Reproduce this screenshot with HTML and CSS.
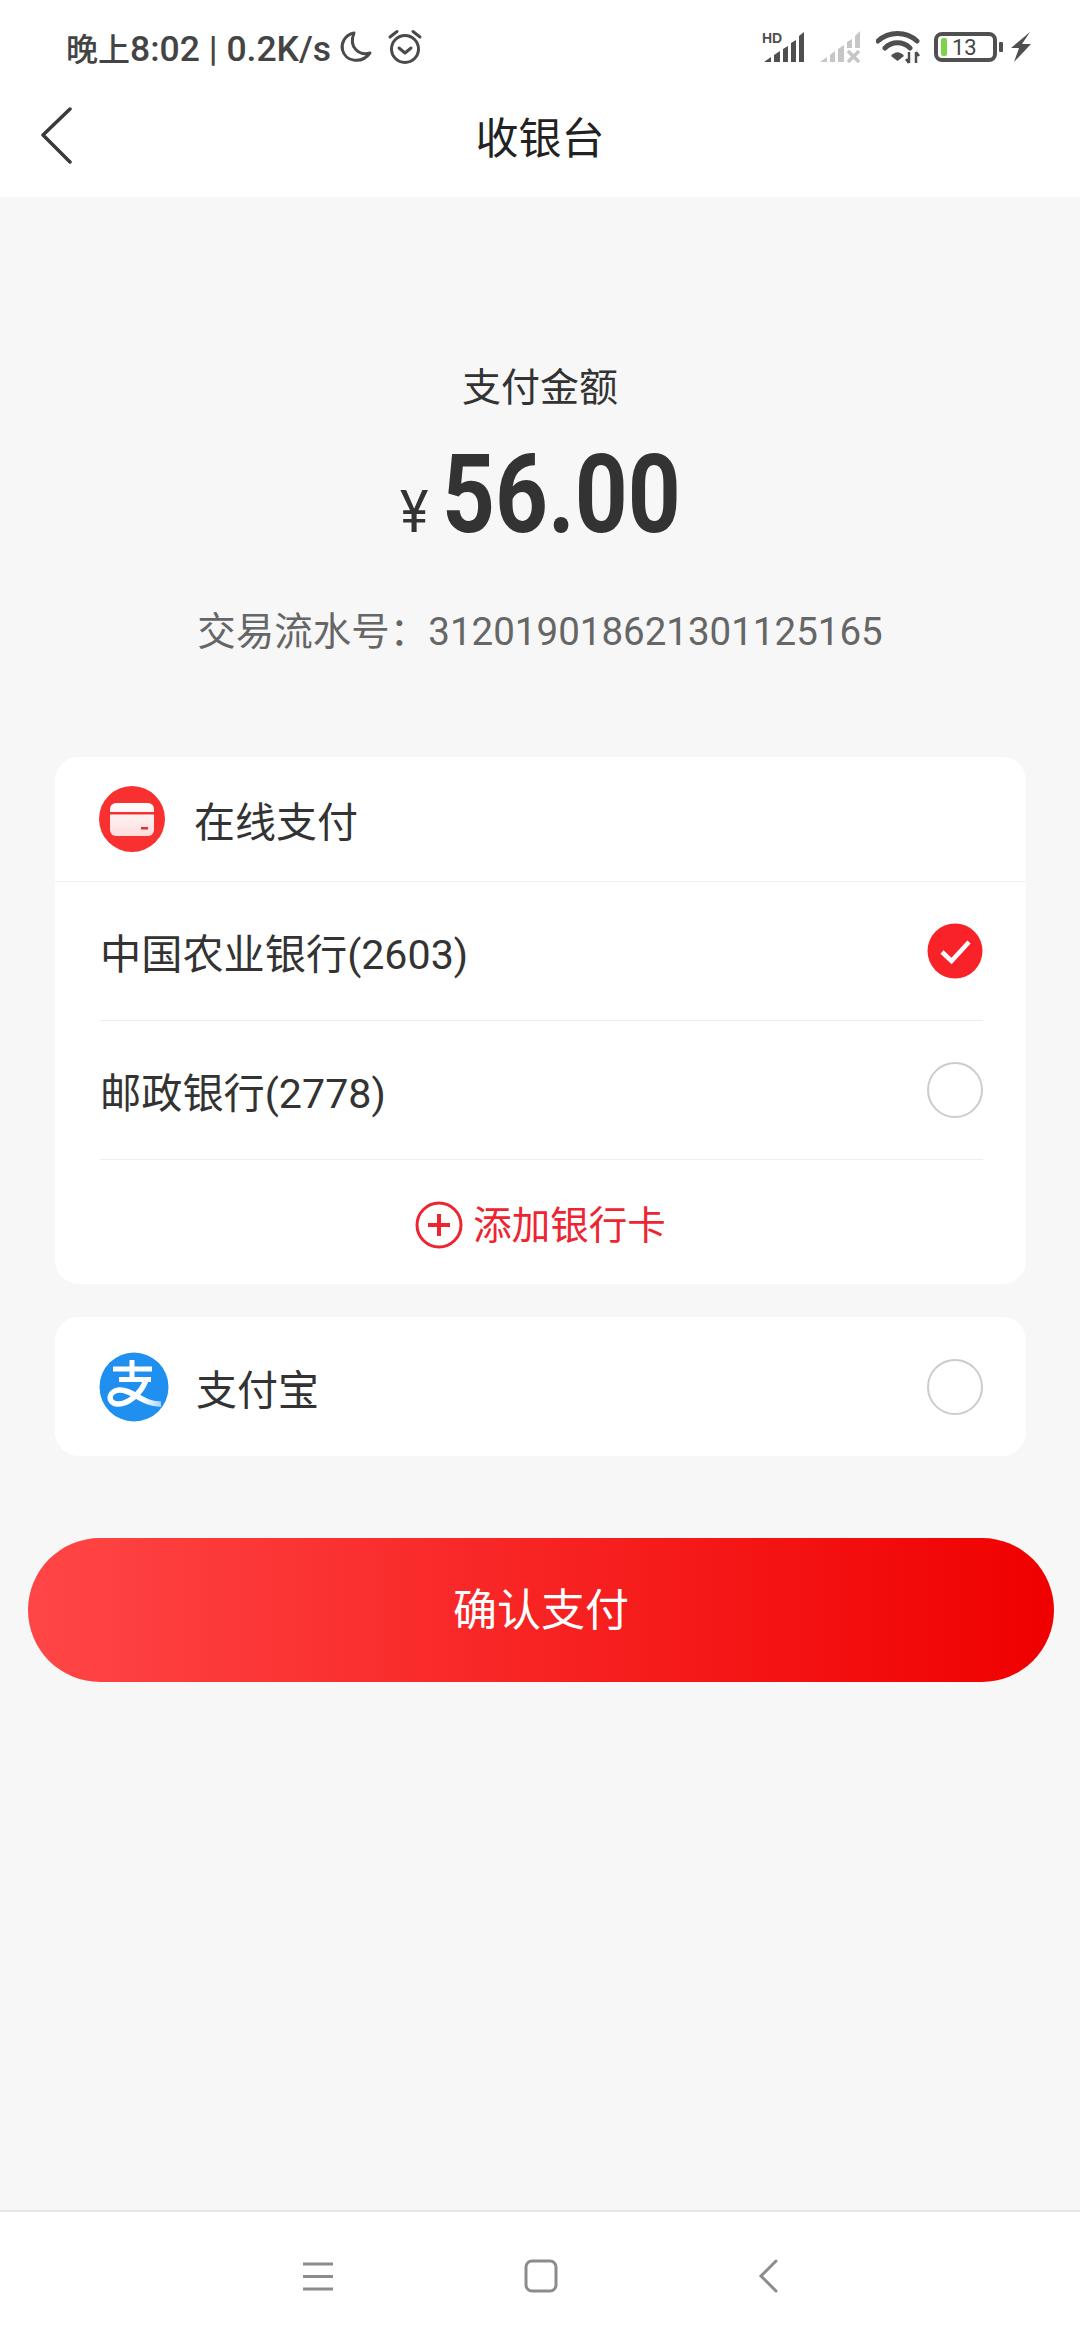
FILE: index.html
```html
<!DOCTYPE html>
<html lang="zh">
<head>
    <meta charset="UTF-8">
    <title>收银台</title>
    <link rel="stylesheet" href="styles.css">
</head>
<body>
    <header class="top">
        <div class="status">
            <div class="status-left">
                <span class="status-text">晚上<span class="status-latin">8:02 | 0.2K/s</span></span>
                <svg class="icon-moon" width="34" height="34" viewBox="0 0 34 34"><path d="M15 3 C5 5 2 14 3.500 20 C6 31 22 35 31 23 C21 26 9 18 15 3 Z" fill="none" stroke="#4a4a4a" stroke-width="3" stroke-linejoin="round"/></svg>
                <svg class="icon-alarm" width="36" height="36" viewBox="0 0 36 36" fill="none" stroke="#4a4a4a" stroke-width="3"><circle cx="18" cy="20" r="13.500"/><path d="M12 19 L18 24 L24 19" stroke-linecap="round" stroke-linejoin="round"/><path d="M3 8 L10 2.500 M33 8 L26 2.500" stroke-linecap="round"/></svg>
            </div>
            <div class="status-right">
                <svg width="44" height="32" viewBox="0 0 44 32" class="icon-signal">
                    <text x="0" y="12" class="hd">HD</text>
                    <path d="M2 31 L9 26 V31 Z M12 24 L18 20 V31 H12 Z M21 18 L26 15 V31 H21 Z M29 12 L34 9 V31 H29 Z M37 5 L42 1 V31 H37 Z" fill="#4f4f4f"/>
                </svg>
                <svg width="42" height="32" viewBox="0 0 42 32" class="icon-signal2">
                    <path d="M1 31 L8 26 V31 Z M11 24 L16 20 V31 H11 Z M19 18 L25 14 V31 H19 Z M28 11 L33 8 V17 H28 Z M36 5 L41 0 V17 H36 Z" fill="#c6c6c6"/>
                    <path d="M29 20 L40 31 M40 20 L29 31" stroke="#c6c6c6" stroke-width="3.500"/>
                </svg>
                <svg width="46" height="34" viewBox="0 0 46 34" class="icon-wifi">
                    <path d="M2 11 C13 1 30 1 41 11 M9 18 C16 11 27 11 34 18" fill="none" stroke="#4f4f4f" stroke-width="5" stroke-linecap="round"/>
                    <path d="M15 26 C19 21 24 21 28 26 L21.500 31 Z" fill="#4f4f4f"/>
                    <path d="M33 22 V33 M33 33 L30 29 M40 33 V22 M40 22 L43 26" stroke="#4f4f4f" stroke-width="2.500" fill="none"/>
                </svg>
                <div class="battery">
                    <span class="battery-body">
                        <i class="battery-level"></i>
                        <span class="battery-num">13</span>
                    </span>
                    <i class="battery-nub"></i>
                </div>
                <svg width="20" height="30" viewBox="0 0 20 30" class="icon-bolt"><path d="M19 0 L0 16 H8 L3 30 L20 12 H11 Z" fill="#4f4f4f"/></svg>
            </div>
        </div>
        <div class="nav">
            <svg class="back" width="34" height="58" viewBox="0 0 34 58"><path d="M31 2 L4 28 L31 55" fill="none" stroke="#3a3a3a" stroke-width="3.500" stroke-linecap="round" stroke-linejoin="round"/></svg>
            <h1>收银台</h1>
        </div>
    </header>

    <main class="main">
        <section class="summary">
            <p class="summary-label">支付金额</p>
            <p class="amount"><span class="yen">¥</span><span class="sum">56.00</span></p>
            <p class="serial">交易流水号：<span class="serial-num">312019018621301125165</span></p>
        </section>

        <section class="card">
            <div class="card-head">
                <svg width="66" height="66" viewBox="0 0 66 66">
                    <defs>
                        <linearGradient id="cardFill" x1="0" y1="0" x2="0" y2="1">
                            <stop offset="0" stop-color="#ffffff"/>
                            <stop offset="1" stop-color="#fcdcdc"/>
                        </linearGradient>
                    </defs>
                    <circle cx="33" cy="33" r="33" fill="#f93030"/>
                    <rect x="11" y="17" width="44" height="33" rx="6" fill="url(#cardFill)"/>
                    <rect x="11" y="26" width="44" height="2.500" fill="#f93030"/>
                    <rect x="42" y="41" width="7" height="2.500" fill="#e03030"/>
                </svg>
                <span class="card-title">在线支付</span>
            </div>
            <div class="bank-row">
                <span class="bank-name">中国农业银行(2603)</span>
                <svg class="radio" width="56" height="56" viewBox="0 0 56 56"><circle cx="28" cy="28" r="27.500" fill="#f82228"/><path d="M15 29 L24.500 38 L42 19" fill="none" stroke="#fff" stroke-width="4.500"/></svg>
            </div>
            <div class="bank-row">
                <span class="bank-name">邮政银行(2778)</span>
                <i class="radio-empty"></i>
            </div>
            <div class="add-row">
                <svg class="add-icon" width="48" height="48" viewBox="0 0 48 48" fill="none" stroke="#ee2430"><circle cx="24" cy="24" r="22" stroke-width="3"/><path d="M13 24 H35 M24 13 V35" stroke-width="4"/></svg>
                <span class="add-text">添加银行卡</span>
            </div>
        </section>

        <section class="card card-alipay">
            <div class="alipay-left">
                <svg width="70" height="70" viewBox="0 0 70 70">
                    <defs>
                        <linearGradient id="swoosh" x1="0" y1="0" x2="1" y2="0">
                            <stop offset="0" stop-color="#ffffff"/>
                            <stop offset="0.65" stop-color="#ffffff"/>
                            <stop offset="1" stop-color="#a9d3f8"/>
                        </linearGradient>
                    </defs>
                    <circle cx="35" cy="35" r="34.500" fill="#1f8ff0"/>
                    <path d="M14 17 H53 M20 27.500 H52 M33 8 V27" fill="none" stroke="#fff" stroke-width="5"/>
                    <path d="M47 28 C42 42 28 53 18 52 C8 51 9 39 20 38 C33 37 44 53 62 52" fill="none" stroke="url(#swoosh)" stroke-width="5.500"/>
                </svg>
                <span class="alipay-name">支付宝</span>
            </div>
            <i class="radio-empty"></i>
        </section>

        <button class="pay" type="button">确认支付</button>
    </main>

    <footer class="softkeys">
        <svg width="32" height="30" viewBox="0 0 32 30"><path d="M1 3 H31 M1 15.500 H31 M1 28 H31" stroke="#8c8c8c" stroke-width="3"/></svg>
        <svg class="key-home" width="34" height="34" viewBox="0 0 34 34"><rect x="2" y="2" width="30" height="30" rx="6" fill="none" stroke="#8c8c8c" stroke-width="3"/></svg>
        <svg class="key-back" width="20" height="34" viewBox="0 0 20 34"><path d="M18 2 L3 17 L18 32" fill="none" stroke="#8c8c8c" stroke-width="3" stroke-linecap="round"/></svg>
    </footer>
</body>
</html>
```

FILE: styles.css
```css
/* Page frame */
html, body {
    margin: 0;
    padding: 0;
}

body {
    width: 1080px;
    height: 2340px;
    overflow: hidden;
    display: flex;
    flex-direction: column;
    background-color: #f7f7f7;
    color: #333;
    font-family: Roboto, "Noto Sans CJK SC", sans-serif;
}

p, h1 {
    margin: 0;
    font-weight: normal;
}

/* Status bar and title */
.top {
    height: 197px;
    background-color: #fff;
    flex-shrink: 0;
}

.status {
    height: 75px;
    padding: 25px 49px 0 66px;
    box-sizing: border-box;
    display: flex;
    justify-content: space-between;
    align-items: flex-start;
}

.status-left {
    display: flex;
    align-items: center;
    height: 44px;
}

.status-text {
    font-size: 32px;
    font-weight: 500;
    color: #444;
    white-space: nowrap;
}

.status-latin {
    font-size: 35.5px;
}

.icon-moon {
    margin-left: 8px;
}

.icon-alarm {
    margin-left: 14px;
}

.status-right {
    display: flex;
    align-items: center;
    height: 44px;
}

.hd {
    font-family: "Liberation Sans", sans-serif;
    font-size: 14px;
    font-weight: bold;
    fill: #4f4f4f;
}

.icon-signal2 {
    margin-left: 13px;
}

.icon-wifi {
    margin-left: 15px;
}

.battery {
    margin-left: 12px;
    display: flex;
    align-items: center;
}

.battery-body {
    width: 63px;
    height: 30px;
    box-sizing: border-box;
    border: 4px solid #505050;
    border-radius: 8px;
    display: flex;
    align-items: center;
    padding-left: 3px;
}

.battery-level {
    width: 6px;
    height: 18px;
    border-radius: 2px;
    background-color: #7ed348;
}

.battery-num {
    margin-left: 5px;
    font-size: 22px;
    color: #444;
}

.battery-nub {
    margin-left: 2px;
    width: 4px;
    height: 10px;
    border-radius: 1px;
    background-color: #505050;
}

.icon-bolt {
    margin-left: 8px;
}

.nav {
    height: 122px;
    position: relative;
    display: flex;
    align-items: center;
    justify-content: center;
}

.nav h1 {
    font-size: 43px;
    color: #222;
    margin-bottom: 2px;
}

.back {
    position: absolute;
    left: 39px;
    top: 32px;
}

/* Main column */
.main {
    flex: 1;
    display: flex;
    flex-direction: column;
}

.summary {
    height: 560px;
    padding-top: 165px;
    box-sizing: border-box;
    text-align: center;
}

.summary-label {
    font-size: 39px;
    line-height: 52px;
}

.amount {
    margin-top: 23px;
    height: 116px;
    display: flex;
    justify-content: center;
    align-items: baseline;
}

.yen {
    display: inline-block;
    width: 42px;
    font-size: 60px;
    text-align: left;
    transform: scaleX(0.9);
    transform-origin: left;
}

.sum {
    display: inline-block;
    width: 238px;
    font-weight: bold;
    font-size: 110px;
    line-height: 116px;
    text-align: left;
    white-space: nowrap;
    transform: scaleX(0.84);
    transform-origin: left;
}

.serial {
    margin-top: 53px;
    font-size: 38.500px;
    line-height: 52px;
    color: #666;
}

/* Cards */
.card {
    margin: 0 54px 0 55px;
    background-color: #fff;
    border-radius: 24px;
}

.card-head {
    height: 125px;
    padding-left: 44px;
    box-sizing: border-box;
    border-bottom: 1px solid #eeeeee;
    display: flex;
    align-items: center;
}

.card-title {
    margin-left: 29px;
    font-size: 41px;
}

.bank-row {
    height: 139px;
    margin: 0 43px 0 45px;
    box-sizing: border-box;
    border-bottom: 1px solid #eeeeee;
    display: flex;
    align-items: center;
    justify-content: space-between;
}

.bank-name {
    font-size: 41.200px;
}

.radio {
    display: block;
}

.radio-empty {
    display: block;
    width: 56px;
    height: 56px;
    box-sizing: border-box;
    border: 2px solid #cccccc;
    border-radius: 50%;
}

.add-row {
    height: 124px;
    display: flex;
    align-items: center;
    justify-content: center;
    gap: 10px;
}

.add-icon {
    margin-top: 5px;
}

.add-text {
    font-size: 38.500px;
    color: #ee2430;
}

.card-alipay {
    margin-top: 33px;
    height: 139px;
    padding: 0 43px 0 44px;
    box-sizing: border-box;
    display: flex;
    align-items: center;
    justify-content: space-between;
}

.alipay-left {
    display: flex;
    align-items: center;
}

.alipay-name {
    margin-left: 27px;
    font-size: 41px;
}

/* Confirm button */
.pay {
    margin: 82px 26px 0 28px;
    height: 144px;
    padding: 0 0 6px;
    border: none;
    border-radius: 72px;
    background: linear-gradient(to right, #ff4646, #f00000);
    color: #fff;
    font-family: inherit;
    font-size: 44px;
}

/* Android soft keys */
.softkeys {
    height: 130px;
    flex-shrink: 0;
    box-sizing: border-box;
    border-top: 2px solid #e6e6e6;
    background-color: #fff;
    display: flex;
    align-items: center;
    justify-content: center;
}

.key-home {
    margin-left: 190px;
}

.key-back {
    margin-left: 200px;
}
```
